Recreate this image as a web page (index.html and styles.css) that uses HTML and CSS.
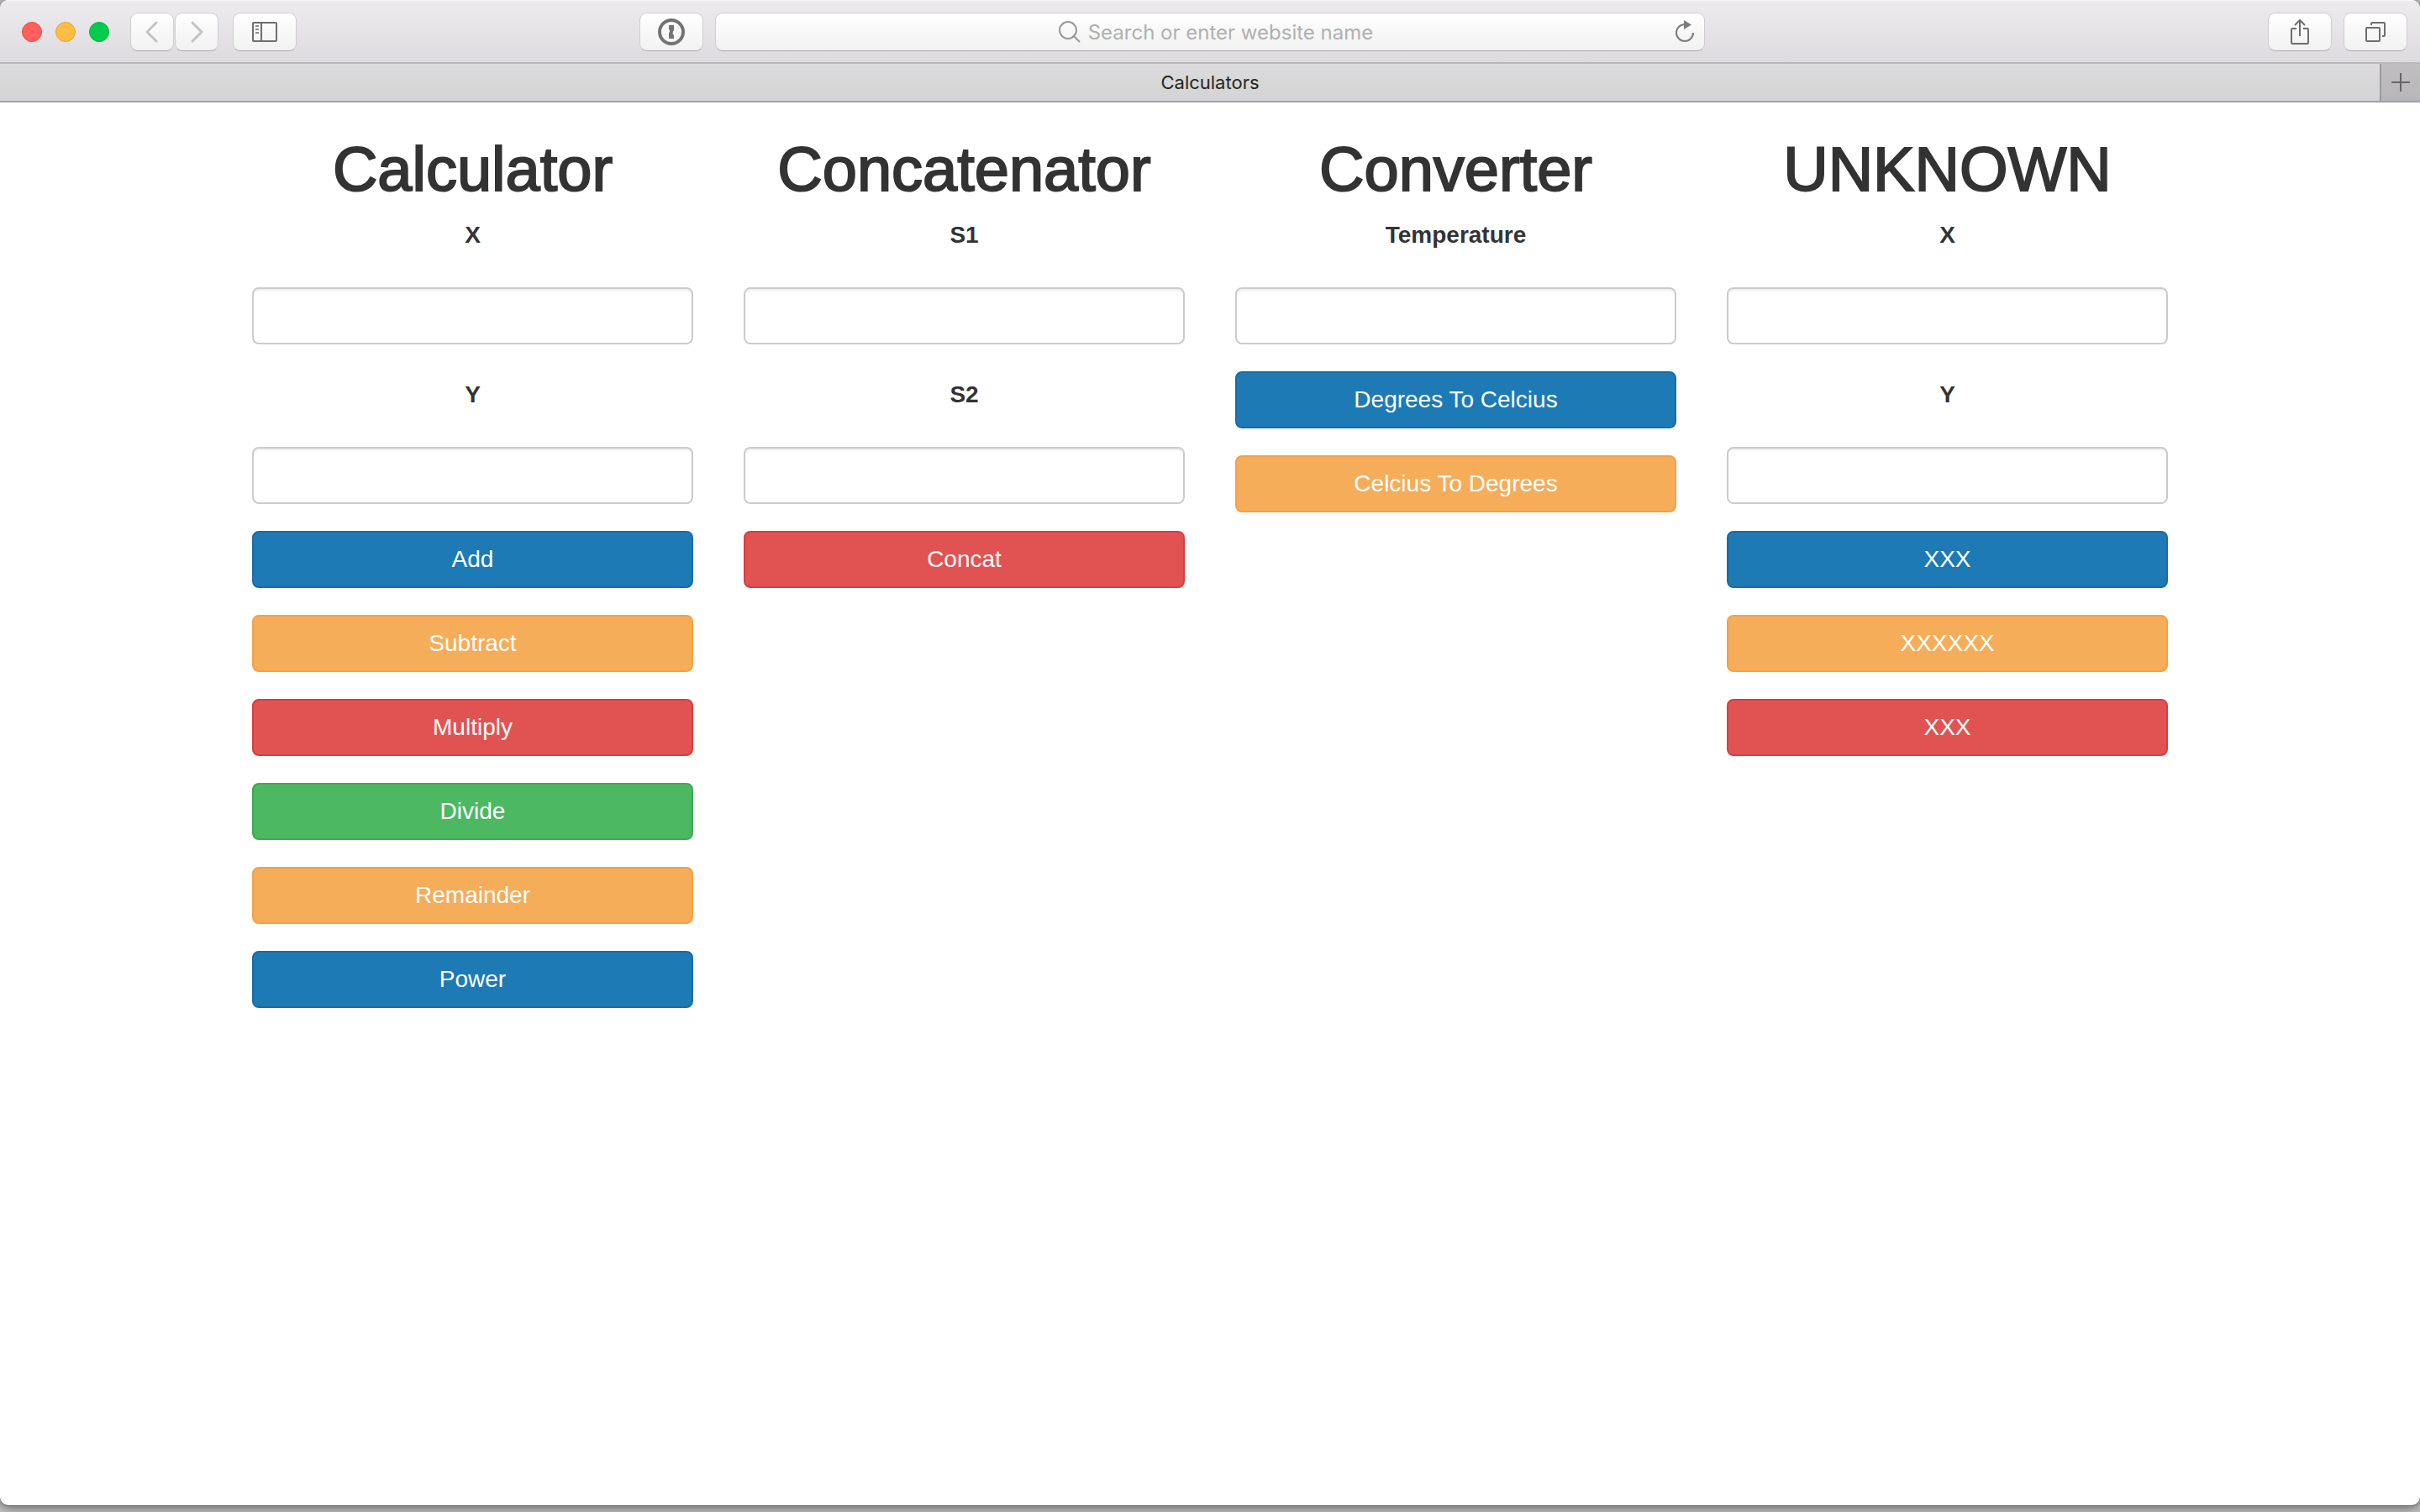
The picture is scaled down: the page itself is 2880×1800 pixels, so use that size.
FILE: index.html
```html
<!DOCTYPE html>
<html lang="en">
<head>
<meta charset="utf-8">
<title>Calculators</title>
<link rel="stylesheet" href="styles.css">
</head>
<body>
<div class="window">
  <header class="toolbar">
    <div class="toolbar-left">
      <div class="lights">
        <button class="light light-close" aria-label="Close"></button>
        <button class="light light-minimize" aria-label="Minimize"></button>
        <button class="light light-zoom" aria-label="Zoom"></button>
      </div>
      <div class="history">
        <button class="tool tool-narrow" aria-label="Back"><svg width="16" height="26" viewBox="0 0 16 26"><path d="M13 2 2 13l11 11" fill="none" stroke="#c3c3c3" stroke-width="3" stroke-linecap="round" stroke-linejoin="round"/></svg></button>
        <button class="tool tool-narrow" aria-label="Forward"><svg width="16" height="26" viewBox="0 0 16 26"><path d="M3 2l11 11L3 24" fill="none" stroke="#c3c3c3" stroke-width="3" stroke-linecap="round" stroke-linejoin="round"/></svg></button>
      </div>
      <button class="tool" aria-label="Show sidebar"><svg width="30" height="24" viewBox="0 0 30 24"><rect x="1" y="1" width="28" height="22" rx="1" fill="none" stroke="#6e6e6e" stroke-width="2"/><path d="M11 1v22" stroke="#6e6e6e" stroke-width="2"/><path d="M4 5h4M4 9h4M4 13h4" stroke="#8e8e8e" stroke-width="2"/></svg></button>
      <button class="tool tool-end" aria-label="Password manager"><svg width="32" height="32" viewBox="0 0 32 32"><circle cx="16" cy="16" r="14" fill="none" stroke="#737373" stroke-width="4"/><path d="M13 8h6v6a2 2 0 0 0-1 2.500a2 2 0 0 0 1 3V24h-6v-7a2 2 0 0 0 1-2a2 2 0 0 0-1-2z" fill="#737373"/></svg></button>
    </div>
    <div class="address">
      <svg width="26" height="26" viewBox="0 0 26 26"><circle cx="11" cy="11" r="10" fill="none" stroke="#999" stroke-width="2"/><path d="M17 17l8 8" stroke="#999" stroke-width="2"/></svg>
      <input class="address-input" type="text" aria-label="Address" placeholder="Search or enter website name">
      <button class="reload" aria-label="Reload"><svg width="24" height="28" viewBox="0 0 24 28"><path d="M22 15a10 10 0 1 1-10-10" fill="none" stroke="#7b7b7b" stroke-width="2"/><path d="M11 0l9 5.500-9 5.500z" fill="#7b7b7b"/></svg></button>
    </div>
    <div class="toolbar-right">
      <button class="tool" aria-label="Share"><svg width="24" height="32" viewBox="0 0 24 32"><path d="M8 12H3a1 1 0 0 0-1 1v16a1 1 0 0 0 1 1h18a1 1 0 0 0 1-1V13a1 1 0 0 0-1-1h-5M12 21V3M6 8l6-6 6 6" fill="none" stroke="#6e6e6e" stroke-width="2"/></svg></button>
      <button class="tool" aria-label="Show all tabs"><svg width="26" height="26" viewBox="0 0 26 26"><rect x="2" y="8" width="16" height="16" rx="1" fill="none" stroke="#6e6e6e" stroke-width="2"/><path d="M8 5V3a1 1 0 0 1 1-1h14a1 1 0 0 1 1 1v14a1 1 0 0 1-1 1h-2" fill="none" stroke="#6e6e6e" stroke-width="2"/></svg></button>
    </div>
  </header>
  <nav class="tabs">
    <a class="tab" href="#">Calculators</a>
    <button class="new-tab" aria-label="New tab"><svg width="22" height="22" viewBox="0 0 22 22"><path d="M11 0v22M0 11h22" stroke="#666" stroke-width="2"/></svg></button>
  </nav>
  <main class="page">
    <section class="panel">
      <h1 class="title">Calculator</h1>
      <form class="fields">
        <label class="label" for="calc-x">X</label>
        <input class="input" id="calc-x" type="text">
        <label class="label" for="calc-y">Y</label>
        <input class="input" id="calc-y" type="text">
        <button class="btn btn-blue" type="button">Add</button>
        <button class="btn btn-orange" type="button">Subtract</button>
        <button class="btn btn-red" type="button">Multiply</button>
        <button class="btn btn-green" type="button">Divide</button>
        <button class="btn btn-orange" type="button">Remainder</button>
        <button class="btn btn-blue" type="button">Power</button>
      </form>
    </section>
    <section class="panel">
      <h1 class="title">Concatenator</h1>
      <form class="fields">
        <label class="label" for="s1">S1</label>
        <input class="input" id="s1" type="text">
        <label class="label" for="s2">S2</label>
        <input class="input" id="s2" type="text">
        <button class="btn btn-red" type="button">Concat</button>
      </form>
    </section>
    <section class="panel">
      <h1 class="title">Converter</h1>
      <form class="fields">
        <label class="label" for="temperature">Temperature</label>
        <input class="input" id="temperature" type="text">
        <button class="btn btn-blue" type="button">Degrees To Celcius</button>
        <button class="btn btn-orange" type="button">Celcius To Degrees</button>
      </form>
    </section>
    <section class="panel">
      <h1 class="title">UNKNOWN</h1>
      <form class="fields">
        <label class="label" for="unknown-x">X</label>
        <input class="input" id="unknown-x" type="text">
        <label class="label" for="unknown-y">Y</label>
        <input class="input" id="unknown-y" type="text">
        <button class="btn btn-blue" type="button">XXX</button>
        <button class="btn btn-orange" type="button">XXXXXX</button>
        <button class="btn btn-red" type="button">XXX</button>
      </form>
    </section>
  </main>
</div>
</body>
</html>
```
FILE: styles.css
```css
* {
  box-sizing: border-box;
}

body {
  margin: 0;
  min-height: 100vh;
  padding-bottom: 8px;
  display: flex;
  flex-direction: column;
  background: #c4c4c4;
  color: #333;
  font-family: "Liberation Sans", Arial, sans-serif;
  font-size: 28px;
  line-height: 40px;
}

button,
input {
  margin: 0;
  padding: 0;
  border: 0;
  font: inherit;
  color: inherit;
}

svg {
  display: block;
  flex: none;
}

.window {
  flex: 1;
  background: #fff;
  border-radius: 10px;
  overflow: hidden;
  box-shadow: 0 1px 0 #666, 0 2px 14px rgba(0, 0, 0, 0.6);
}

/* Browser chrome */

.toolbar {
  display: grid;
  grid-template-columns: minmax(0, 1fr) minmax(400px, 1178px) minmax(0, 1fr);
  column-gap: 14px;
  align-items: center;
  height: 76px;
  padding: 0 15px;
  border-top: 1px solid #f7f6f8;
  border-bottom: 2px solid #b9b7bb;
  background: linear-gradient(#edebee, #dedbdf);
}

.toolbar-left,
.toolbar-right,
.lights,
.history {
  display: flex;
  align-items: center;
}

.toolbar-right {
  justify-content: flex-end;
  gap: 14px;
}

.lights {
  gap: 16px;
  margin: 0 25px 0 11px;
}

.light {
  width: 24px;
  height: 24px;
  border: 1px solid;
  border-radius: 50%;
}

.light-close {
  background: #ff605c;
  border-color: #ea4a48;
}

.light-minimize {
  background: #ffbe41;
  border-color: #e2a135;
}

.light-zoom {
  background: #00cd4e;
  border-color: #00b33c;
}

.history {
  gap: 1px;
  margin-right: 17px;
}

.tool,
.address {
  height: 46px;
  border: 1px solid #cfcdd0;
  border-bottom-color: #a9a7aa;
  border-radius: 9px;
  background: linear-gradient(#fff, #f1f1f1);
}

.tool {
  display: flex;
  align-items: center;
  justify-content: center;
  width: 76px;
}

.tool-narrow {
  width: 52px;
}

.tool-end {
  margin-left: auto;
}

.address {
  position: relative;
  display: flex;
  align-items: center;
  justify-content: center;
  gap: 9px;
  padding-left: 14px;
}

.address-input {
  field-sizing: content;
  padding-top: 2px;
  background: none;
  outline: 0;
  font-family: Inter, sans-serif;
  font-size: 24px;
  line-height: 32px;
}

.address-input::placeholder {
  color: #b0b0b0;
  opacity: 1;
}

.reload {
  position: absolute;
  right: 11px;
  top: 8px;
  background: none;
}

.tabs {
  display: flex;
  height: 46px;
  background: linear-gradient(#dddbde, #d7d7d7 50%, #d5d3d6);
  border-bottom: 2px solid #a19fa3;
}

.tab {
  flex: 1;
  padding-left: 48px;
  color: #262626;
  font-family: Inter, sans-serif;
  font-size: 22px;
  line-height: 44px;
  text-align: center;
  text-decoration: none;
}

.new-tab {
  display: flex;
  align-items: center;
  justify-content: center;
  width: 48px;
  border-left: 2px solid #9b999d;
  background: linear-gradient(#c0bec1, #b8b6b9);
}

/* Page */

.page {
  display: grid;
  grid-template-columns: repeat(4, minmax(0, 1fr));
  column-gap: 60px;
  max-width: 2340px;
  margin: 0 auto;
  padding: 40px 30px;
}

/* The outline gives the regular face a medium weight. */
.title {
  margin: 0 0 10px;
  font-size: 74px;
  font-weight: 400;
  line-height: 80px;
  text-align: center;
  -webkit-text-stroke: 2px #333;
}

.fields {
  display: flex;
  flex-direction: column;
  gap: 32px;
}

.label {
  padding: 8px 0 10px;
  font-weight: 700;
  text-align: center;
}

.input {
  width: 100%;
  height: 68px;
  padding: 12px 24px;
  border: 2px solid #ccc;
  border-radius: 8px;
  background: #fff;
  box-shadow: inset 0 2px 2px rgba(0, 0, 0, 0.075);
}

.btn {
  height: 68px;
  border: 2px solid;
  border-radius: 8px;
  color: #fff;
  text-align: center;
}

.btn-blue {
  background: #1d7ab5;
  border-color: #1b6ca3;
}

.btn-orange {
  background: #f5ad5a;
  border-color: #f4a146;
}

.btn-red {
  background: #e15352;
  border-color: #dc3c3e;
}

.btn-green {
  background: #4db862;
  border-color: #3da952;
}
```
